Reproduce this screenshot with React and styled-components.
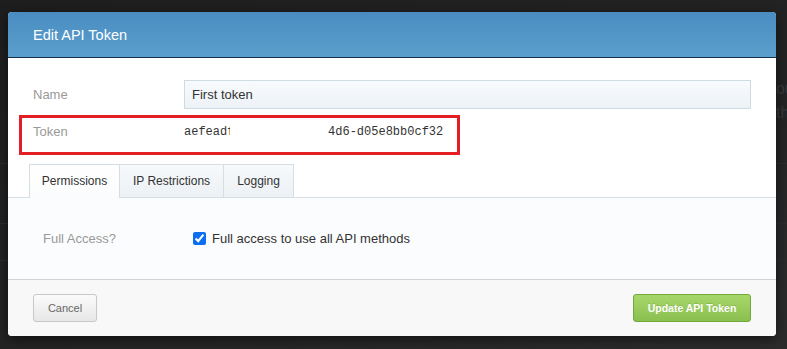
import React from "react";
import styled, { createGlobalStyle } from "styled-components";

const Global = createGlobalStyle`
  html, body { margin: 0; padding: 0; background: #232323; }
  body { font-family: "Liberation Sans", Arial, sans-serif; }
  * { box-sizing: border-box; }
`;

const Page = styled.div`
  position: relative;
  width: 787px;
  height: 349px;
  overflow: hidden;
  background: linear-gradient(160deg, #1e1e1e 0%, #242424 60%, #2c2c2c 100%);
`;

const Backdrop = styled.div`
  display: flex;
  flex-direction: column;
  padding-top: 80px;
`;

const BackdropLine = styled.div`
  padding-left: ${(p) => p.$indent}px;
  height: ${(p) => p.$h || 24}px;
  color: #3a3a3a;
  font-size: 16px;
  white-space: nowrap;
  border-bottom: ${(p) => (p.$rule ? "1px solid #2d2d2d" : "none")};
`;

const Modal = styled.div`
  position: absolute;
  left: 8px;
  top: 12px;
  width: 768px;
  height: 324px;
  background: #fff;
  border-radius: 4px;
  box-shadow: 0 3px 12px rgba(0, 0, 0, 0.55);
  display: flex;
  flex-direction: column;
  overflow: hidden;
`;

const Header = styled.div`
  height: 46px;
  flex: none;
  display: flex;
  align-items: center;
  padding-left: 25px;
  background: linear-gradient(#4a8cc1, #5a9fcc);
  border-bottom: 1px solid #16314b;
  color: #fff;
  font-size: 14.5px;
`;

const Form = styled.div`
  display: grid;
  grid-template-columns: 151px 1fr;
  grid-auto-rows: 29px;
  row-gap: 8px;
  padding: 22px 25px 0 25px;
`;

const Label = styled.div`
  align-self: center;
  color: #999;
  font-size: 13px;
`;

const TextInput = styled.input`
  height: 29px;
  width: 100%;
  border: 1px solid #cfdbe2;
  border-radius: 0;
  background: linear-gradient(#f8fbfe, #edf2f6);
  padding: 0 7px;
  font-family: "Liberation Sans", Arial, sans-serif;
  font-size: 13px;
  color: #333;
  outline: none;
`;

const TokenValue = styled.div`
  align-self: center;
  font-family: "Liberation Mono", "Courier New", monospace;
  font-size: 12px;
  color: #333;
  white-space: pre;
`;

const Redacted = styled.span`
  position: relative;
  display: inline-block;
  width: 14ch;
  overflow: hidden;
  vertical-align: bottom;
  &::after {
    content: "";
    position: absolute;
    left: 3px;
    top: 0;
    right: 0;
    bottom: 0;
    background: #fff;
  }
`;

const Highlight = styled.div`
  position: absolute;
  left: 11px;
  top: 103px;
  width: 441px;
  height: 40px;
  border: 3px solid #e31e25;
  pointer-events: none;
`;

const TabBar = styled.div`
  display: flex;
  margin-top: 18px;
  padding-left: 21px;
  height: 34px;
  border-bottom: 1px solid #d5dee5;
`;

const Tab = styled.div`
  width: ${(p) => p.$w}px;
  height: ${(p) => (p.$active ? 34 : 33)}px;
  display: flex;
  align-items: center;
  justify-content: center;
  border-top: 1px solid #d5dee5;
  border-right: 1px solid #d5dee5;
  border-left: ${(p) => (p.$first ? "1px solid #d5dee5" : "none")};
  background: ${(p) =>
    p.$active ? "linear-gradient(#ffffff, #fbfcfd)" : "linear-gradient(#f7f9fb, #ecf1f5)"};
  color: #333;
  font-size: 12px;
  padding-bottom: ${(p) => (p.$active ? 1 : 0)}px;
`;

const Body = styled.div`
  flex: 1;
  background: #fbfcfd;
  display: grid;
  grid-template-columns: 150px 1fr;
  align-items: center;
  padding-left: 35px;
`;

const CheckLabel = styled.label`
  display: flex;
  align-items: center;
  gap: 6px;
  color: #333;
  font-size: 13px;
`;

const Check = styled.input`
  margin: 0;
  width: 13px;
  height: 13px;
  accent-color: #0b6ef0;
`;

const Footer = styled.div`
  height: 57px;
  flex: none;
  display: flex;
  align-items: center;
  justify-content: space-between;
  padding: 0 25px;
  background: #f8f8f8;
  border-top: 1px solid #d2d2d2;
`;

const Button = styled.button`
  height: 28px;
  border-radius: 3px;
  font-family: "Liberation Sans", Arial, sans-serif;
  cursor: pointer;
  padding: 0;
  width: ${(p) => p.$w}px;
  ${(p) =>
    p.$primary
      ? `
    background: linear-gradient(#a7d76a, #8ac050);
    border: 1px solid #72a93d;
    color: #fff;
    font-weight: bold;
    font-size: 10.5px;
    text-shadow: 0 -1px 0 rgba(0,0,0,0.12);
  `
      : `
    background: linear-gradient(#fbfbfb, #e7e7e7);
    border: 1px solid #c8c8c8;
    color: #666;
    font-size: 11px;
  `}
`;

export default function App() {
  return (
    <>
      <Global />
      <Page>
        <Backdrop>
          <BackdropLine $indent={768}>you can</BackdropLine>
          <BackdropLine $indent={776} $h={60} $rule>the</BackdropLine>
          <BackdropLine $indent={776} $h={60} $rule />
          <BackdropLine $indent={776} $h={37} $rule />
        </Backdrop>
        <Modal>
          <Header>Edit API Token</Header>
          <Form>
            <Label>Name</Label>
            <TextInput defaultValue="First token" />
            <Label>Token</Label>
            <TokenValue>
              aefead<Redacted>f-0000-0000-0</Redacted>4d6-d05e8bb0cf32
            </TokenValue>
          </Form>
          <TabBar>
            <Tab $first $active $w={91}>Permissions</Tab>
            <Tab $w={104}>IP Restrictions</Tab>
            <Tab $w={70}>Logging</Tab>
          </TabBar>
          <Body>
            <Label>Full Access?</Label>
            <CheckLabel>
              <Check type="checkbox" defaultChecked />
              Full access to use all API methods
            </CheckLabel>
          </Body>
          <Footer>
            <Button $w={64}>Cancel</Button>
            <Button $primary $w={118}>Update API Token</Button>
          </Footer>
          <Highlight />
        </Modal>
      </Page>
    </>
  );
}
